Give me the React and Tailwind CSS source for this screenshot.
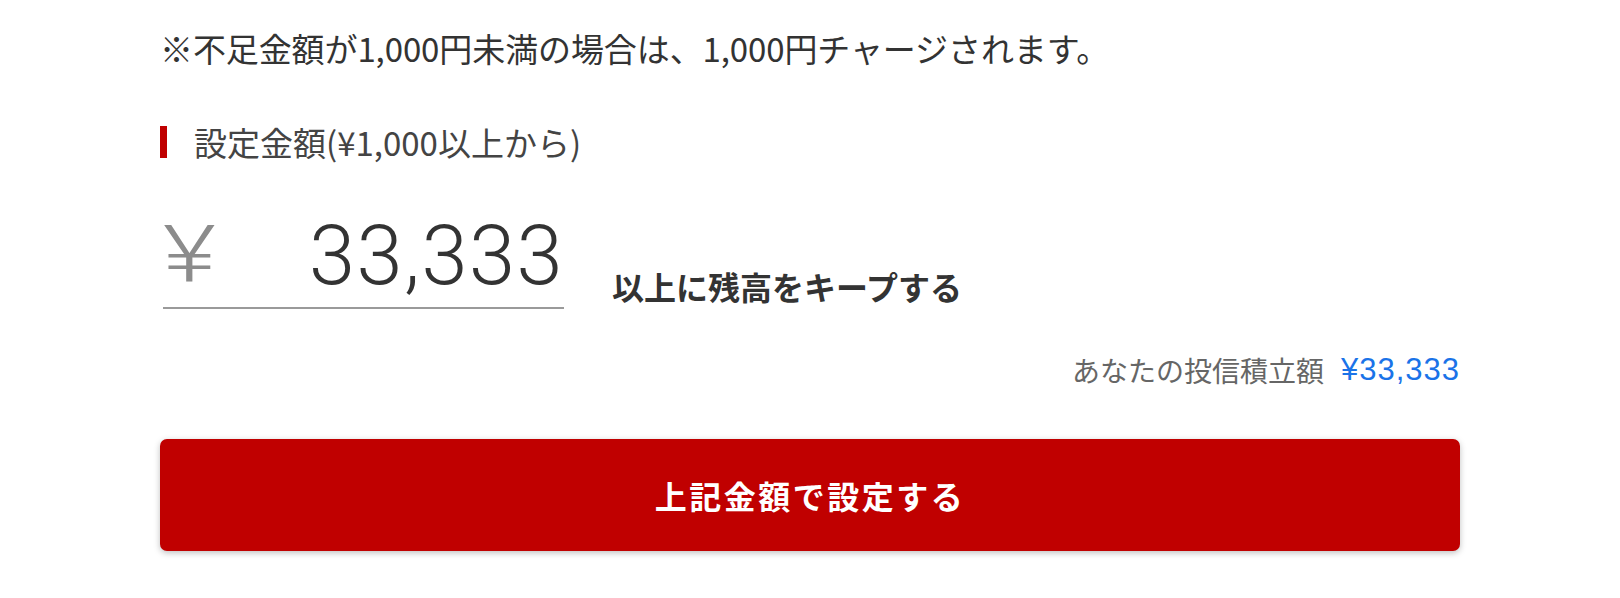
import React, { useState } from 'react';

const jp = { fontFamily: '"Noto Sans CJK JP", "Noto Sans", sans-serif' };
const num = { fontFamily: 'Roboto, "Liberation Sans", sans-serif' };

export default function App() {
  const [amount, setAmount] = useState('33,333');

  return (
    <div className="w-[1620px] h-[598px] bg-white text-[#333]" style={jp}>
      <div className="ml-[160px] w-[1300px] pt-[24px]">
        <p className="text-[33px] leading-[48px] tracking-[-0.1px]">
          ※不足金額が1,000円未満の場合は、1,000円チャージされます。
        </p>

        <div className="mt-[54px] flex items-center h-[32px]">
          <span className="w-[7px] h-[32px] bg-[#c00000]" />
          <span className="ml-[27px] text-[33px] leading-[32px] text-[#444]">設定金額(¥1,000以上から)</span>
        </div>

        <div className="mt-[56px] flex items-start">
          <label className="ml-[3px] w-[401px] flex items-start justify-between border-b-2 border-[#9a9a9a] pb-[10px] pl-0 pr-0">
            <span className="inline-block origin-left scale-x-[1.28] text-[80px] leading-[83px] font-light text-[#8c8c8c]" style={num}>¥</span>
            <input
              value={amount}
              onChange={(e) => setAmount(e.target.value)}
              className="w-[300px] text-right text-[83px] leading-[83px] h-[83px] tracking-[1.5px] outline-none bg-transparent text-[#333]"
              style={{ ...num, fontWeight: 300 }}
            />
          </label>
          <span className="ml-[48px] mt-[56px] text-[32px] leading-[32px] font-bold text-[#333]">以上に残高をキープする</span>
        </div>

        <div className="mt-[41px] flex justify-end items-center h-[40px]">
          <span className="text-[28px] leading-[40px] text-[#666]">あなたの投信積立額</span>
          <span className="ml-[17px] text-[31px] leading-[40px] tracking-[1px] text-[#1a73e8]" style={{ fontFamily: '"Liberation Sans", sans-serif' }}>¥33,333</span>
        </div>

        <button className="mt-[49px] w-full h-[112px] rounded-[7px] bg-[#c00000] shadow-[0_2px_6px_rgba(0,0,0,0.25)] text-white text-[32px] font-bold tracking-[2.5px]">
          上記金額で設定する
        </button>
      </div>
    </div>
  );
}
